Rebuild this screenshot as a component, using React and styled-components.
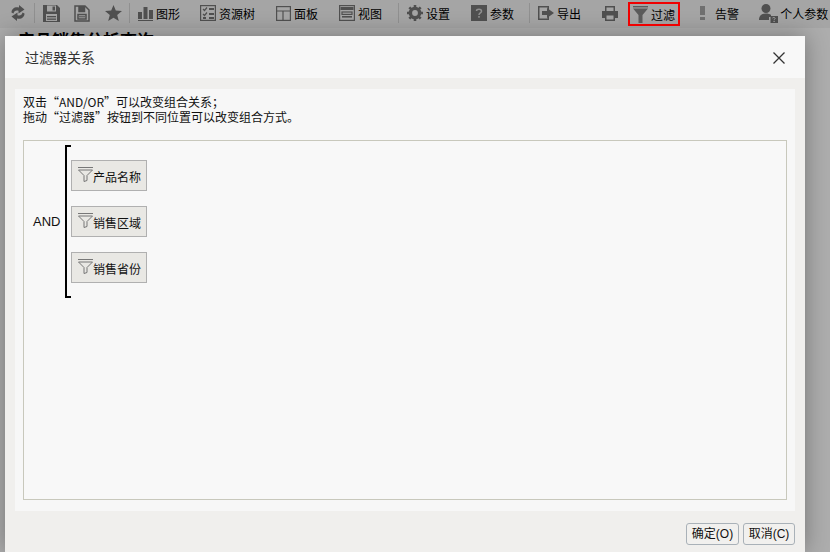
import React from "react";
import styled, { createGlobalStyle } from "styled-components";

const Global = createGlobalStyle`
  html, body { margin: 0; padding: 0; width: 830px; height: 552px; overflow: hidden; background: #fff; }
  body { font-family: "Liberation Sans", "Noto Sans CJK SC", sans-serif; }
`;
const Page = styled.div`
  position: relative;
  width: 830px;
  height: 552px;
  overflow: hidden;
  background: #fff;
`;
const Toolbar = styled.div`
  display: flex;
  align-items: center;
  height: 28px;
  padding-left: 11px;
  background: #f4f4f4;
  white-space: nowrap;
`;
const Tool = styled.div`
  display: flex;
  align-items: center;
  gap: ${(p) => p.$gap ?? 3}px;
  margin-left: ${(p) => p.$ml ?? 0}px;
  height: 24px;
  box-sizing: border-box;
  padding-bottom: 2px;
  font-size: 12px;
  color: #000;
  svg { flex: none; display: block; }
`;
const Sep = styled.div`
  width: 1px;
  height: 20px;
  margin-left: ${(p) => p.$ml}px;
  margin-bottom: 2px;
  background: #d4d4d4;
`;
const ActiveTool = styled(Tool)`
  width: 52px;
  padding-left: 3px;
  padding-bottom: 0;
  border: 2px solid #f00000;
  position: relative;
  z-index: 3;
`;
const Heading = styled.h1`
  margin: 0;
  padding: 3px 0 0 18px;
  font-size: 17px;
  line-height: 22px;
  font-weight: 700;
  color: #000;
`;
const Overlay = styled.div`
  position: absolute;
  inset: 0;
  background: rgba(0, 0, 0, 0.32);
`;
const Dialog = styled.div`
  position: absolute;
  left: 5px;
  top: 36px;
  width: 800px;
  height: 516px;
  display: flex;
  flex-direction: column;
  background: #f0efed;
  box-shadow: 0 0 22px rgba(0, 0, 0, 0.32);
`;
const DialogHeader = styled.div`
  flex: none;
  height: 42px;
  padding: 0 20px;
  display: flex;
  align-items: center;
  justify-content: space-between;
  background: #f8f8f8;
  font-size: 14px;
  color: #333;
`;
const Close = styled.div`
  display: flex;
  margin: 1px -1px 0 0;
`;
const Content = styled.div`
  flex: none;
  margin: 11px 10px 0;
  height: 422px;
  box-sizing: border-box;
  padding: 5px 8px 11px;
  background: #f7f7f7;
  display: flex;
  flex-direction: column;
`;
const Hint = styled.div`
  flex: none;
  height: 46px;
  font-family: "Noto Sans CJK SC", "Liberation Sans", sans-serif;
  font-size: 12px;
  line-height: 15px;
  color: #111;
`;
const Canvas = styled.div`
  flex: 1;
  box-sizing: border-box;
  border: 1px solid #c8c8bc;
  background: #f8f8f8;
  display: flex;
  align-items: flex-start;
  padding: 4px 0 0 9px;
`;
const Operator = styled.div`
  width: 32px;
  height: 153px;
  display: flex;
  align-items: center;
  padding-bottom: 1px;
  box-sizing: border-box;
  font-size: 13px;
  color: #111;
`;
const Bracket = styled.div`
  box-sizing: border-box;
  width: 6px;
  height: 153px;
  border: 2px solid #000;
  border-right: 0;
`;
const Filters = styled.div`
  display: flex;
  flex-direction: column;
  gap: 15px;
  margin: 15px 0 0 0;
`;
const Filter = styled.div`
  box-sizing: border-box;
  width: 76px;
  height: 31px;
  border: 1px solid #b0b0b0;
  background: #e9e8e4;
  display: flex;
  align-items: flex-start;
  padding: 6px 0 0 6px;
  font-size: 12px;
  color: #111;
  span { margin-top: 3px; line-height: 16px; }
  svg { flex: none; }
`;
const Footer = styled.div`
  flex: 1;
  display: flex;
  justify-content: flex-end;
  align-items: flex-start;
  gap: 4px;
  padding: 12px 10px 0 0;
`;
const Button = styled.div`
  box-sizing: border-box;
  height: 22px;
  width: ${(p) => p.$w}px;
  border: 1px solid #a9b1b8;
  border-radius: 3px;
  background: #f1f0ee;
  font-size: 12px;
  line-height: 20px;
  text-align: center;
  color: #111;
`;

const C = "#767676";
const BG = "#f4f4f4";
const Refresh = () => (
  <svg width="14" height="16" viewBox="0 0 14 16" fill={C}>
    <path d="M0.5 7.5 C0.5 3.5 4 1.5 8 2.5 L8 0 L13.5 4.5 L7.5 8.5 L7.5 5.8 C5 5 3 6 2.5 8.5 Z" />
    <path d="M13.5 8.5 C13.5 12.5 10 14.5 6 13.5 L6 16 L0.5 11.5 L6.5 7.5 L6.5 10.2 C9 11 11 10 11.5 7.5 Z" />
  </svg>
);
const Save = () => (
  <svg width="17" height="17" viewBox="0 0 17 17" fill={C}>
    <path fillRule="evenodd" d="M0 0H14L17 3V17H0ZM4 0.5V6.5H13V0.5ZM9.5 1.5H12V5.5H9.5ZM3 9V16H14V9Z" />
    <rect x="4" y="11" width="9" height="1.3" /><rect x="4" y="13.5" width="9" height="1.3" />
  </svg>
);
const SaveAs = () => (
  <svg width="16" height="17" viewBox="0 0 16 17" fill="none" stroke={C} strokeWidth="1.5">
    <path d="M1 1H11L15 5V16H1Z" />
    <path d="M5 1V6.5H10.5V1" fill={C} />
    <path d="M4 9.5H12V14H4Z" /><path d="M5 11.8H11" strokeWidth="1" />
  </svg>
);
const Star = () => (
  <svg width="17" height="16" viewBox="0 0 17 16" fill={C}><path d="M8.5 0L10.8 5.6L17 6.1L12.2 10L13.8 16L8.5 12.7L3.2 16L4.8 10L0 6.1L6.2 5.6Z" /></svg>
);
const Chart = () => (
  <svg width="15" height="15" viewBox="0 0 15 15" fill={C}>
    <rect x="0" y="6" width="4" height="7" /><rect x="5.5" y="1" width="4" height="12" /><rect x="11" y="4" width="4" height="9" /><rect x="0" y="14" width="15" height="1" />
  </svg>
);
const ResTree = () => (
  <svg width="16" height="16" viewBox="0 0 16 16" fill="none" stroke={C} strokeWidth="1.2">
    <rect x=".6" y=".6" width="14.8" height="14.8" />
    <path d="M3 4L4.5 5.5L7 2.5M3 9L4.5 10.5L7 7.5" />
    <rect x="9" y="3" width="5" height="2" fill={C} stroke="none" /><rect x="9" y="8" width="5" height="2" fill={C} stroke="none" />
    <rect x="3" y="12" width="3" height="2" fill={C} stroke="none" /><rect x="9" y="12" width="5" height="2" fill={C} stroke="none" />
  </svg>
);
const PanelI = () => (
  <svg width="15" height="15" viewBox="0 0 15 15" fill="none" stroke={C} strokeWidth="1.2">
    <rect x=".6" y=".6" width="13.8" height="13.8" /><path d="M.6 5H14.4M7 5V14.4" />
  </svg>
);
const ViewI = () => (
  <svg width="16" height="16" viewBox="0 0 16 16" fill="none" stroke={C} strokeWidth="1.2">
    <rect x=".6" y=".6" width="14.8" height="14.8" />
    <rect x="1.5" y="2" width="13" height="3" fill={C} stroke="none" />
    <rect x="3" y="7" width="10" height="2.4" /><path d="M3 11.8H13" strokeWidth="1.6" />
  </svg>
);
const Gear = () => (
  <svg width="16" height="16" viewBox="0 0 16 16">
    <circle cx="8" cy="8" r="4.6" fill="none" stroke={C} strokeWidth="3.4" />
    <g stroke={C} strokeWidth="2.6">
      <path d="M8 0V3M8 13V16M0 8H3M13 8H16M2.3 2.3L4.4 4.4M11.6 11.6L13.7 13.7M13.7 2.3L11.6 4.4M4.4 11.6L2.3 13.7" />
    </g>
  </svg>
);
const Question = () => (
  <svg width="16" height="16" viewBox="0 0 16 16"><rect width="16" height="16" fill={C} />
    <path d="M5.5 6C5.5 3.8 10.5 3.6 10.5 6.2C10.5 8 8 7.8 8 10" fill="none" stroke={BG} strokeOpacity=".75" strokeWidth="1.5" /><rect x="7.2" y="11" width="1.6" height="1.7" fill={BG} fillOpacity=".75" />
  </svg>
);
const ExportI = () => (
  <svg width="16" height="16" viewBox="0 0 16 16" fill={C}>
    <path fillRule="evenodd" d="M0 1H11V5H9.5V2.5H1.5V13.5H9.5V11H11V15H0Z" /><path d="M4 6H9V3L16 8L9 13V10H4Z" />
  </svg>
);
const PrintI = () => (
  <svg width="16" height="15" viewBox="0 0 16 15" fill={C}>
    <path fillRule="evenodd" d="M3 0H13V5H16V12H13V15H3V12H0V5H3ZM4.5 1.5V5H11.5V1.5ZM4.5 9.5V13.5H11.5V9.5Z" />
  </svg>
);
const FunnelSolid = () => (
  <svg width="15" height="17" viewBox="0 0 15 17" fill="#5a5a5a">
    <rect width="15" height="1.4" /><path d="M0 2.6H15L9.5 9V17H5.5V9Z" />
  </svg>
);
const Alarm = () => (
  <svg width="6" height="14" viewBox="0 0 6 14" fill="#a6a6a6"><rect width="5" height="9" /><rect y="11" width="5" height="3" /></svg>
);
const Person = () => (
  <svg width="19" height="19" viewBox="0 0 19 19" fill={C}>
    <circle cx="7" cy="4.5" r="4.5" /><path d="M0 16C0 11 3 9.5 7 9.5C9 9.5 11 10 12 11V13H10V16Z" />
    <rect x="11.5" y="12" width="7.5" height="7" /><rect x="14.5" y="16.8" width="1.2" height="1.2" fill={BG} /><path d="M13.5 14C14.5 13 16.5 13.5 16 14.8L15 15.8" stroke={BG} fill="none" />
  </svg>
);
const X = () => (
  <svg width="14" height="14" viewBox="0 0 14 14" stroke="#333" strokeWidth="1.3" fill="none"><path d="M1.5 1.5L12.5 12.5M12.5 1.5L1.5 12.5" /></svg>
);
const FunnelOutline = () => (
  <svg width="15" height="15" viewBox="0 0 15 15" fill="none" stroke="#777" strokeWidth="1">
    <path d="M0 .5H15" /><path d="M.5 3H14.5L9 8.5V13.5L6 14.5V8.5Z" />
  </svg>
);

const filters = ["产品名称", "销售区域", "销售省份"];

export default function App() {
  return (
    <Page>
      <Global />
      <Toolbar>
        <Tool><Refresh /></Tool>
        <Sep $ml={9} />
        <Tool $ml={8}><Save /></Tool>
        <Tool $ml={14}><SaveAs /></Tool>
        <Tool $ml={15}><Star /></Tool>
        <Sep $ml={7} />
        <Tool $ml={8}><Chart />图形</Tool>
        <Tool $ml={20}><ResTree />资源树</Tool>
        <Tool $ml={21}><PanelI />面板</Tool>
        <Tool $ml={21}><ViewI />视图</Tool>
        <Sep $ml={16} />
        <Tool $ml={8}><Gear />设置</Tool>
        <Tool $ml={21}><Question />参数</Tool>
        <Sep $ml={15} />
        <Tool $ml={8}><ExportI />导出</Tool>
        <Tool $ml={21}><PrintI /></Tool>
        <ActiveTool $ml={10}><FunnelSolid />过滤</ActiveTool>
        <Tool $ml={20} $gap={9}><Alarm />告警</Tool>
        <Tool $ml={20} $gap={2}><Person />个人参数</Tool>
      </Toolbar>
      <Heading>产品销售分析查询</Heading>
      <Overlay />
      <Dialog>
        <DialogHeader>
          过滤器关系
          <Close><X /></Close>
        </DialogHeader>
        <Content>
          <Hint>
            双击“AND/OR”可以改变组合关系；<br />
            拖动“过滤器”按钮到不同位置可以改变组合方式。
          </Hint>
          <Canvas>
            <Operator>AND</Operator>
            <Bracket />
            <Filters>
              {filters.map((f) => (
                <Filter key={f}><FunnelOutline /><span>{f}</span></Filter>
              ))}
            </Filters>
          </Canvas>
        </Content>
        <Footer>
          <Button $w={53}>确定(O)</Button>
          <Button $w={52}>取消(C)</Button>
        </Footer>
      </Dialog>
    </Page>
  );
}
